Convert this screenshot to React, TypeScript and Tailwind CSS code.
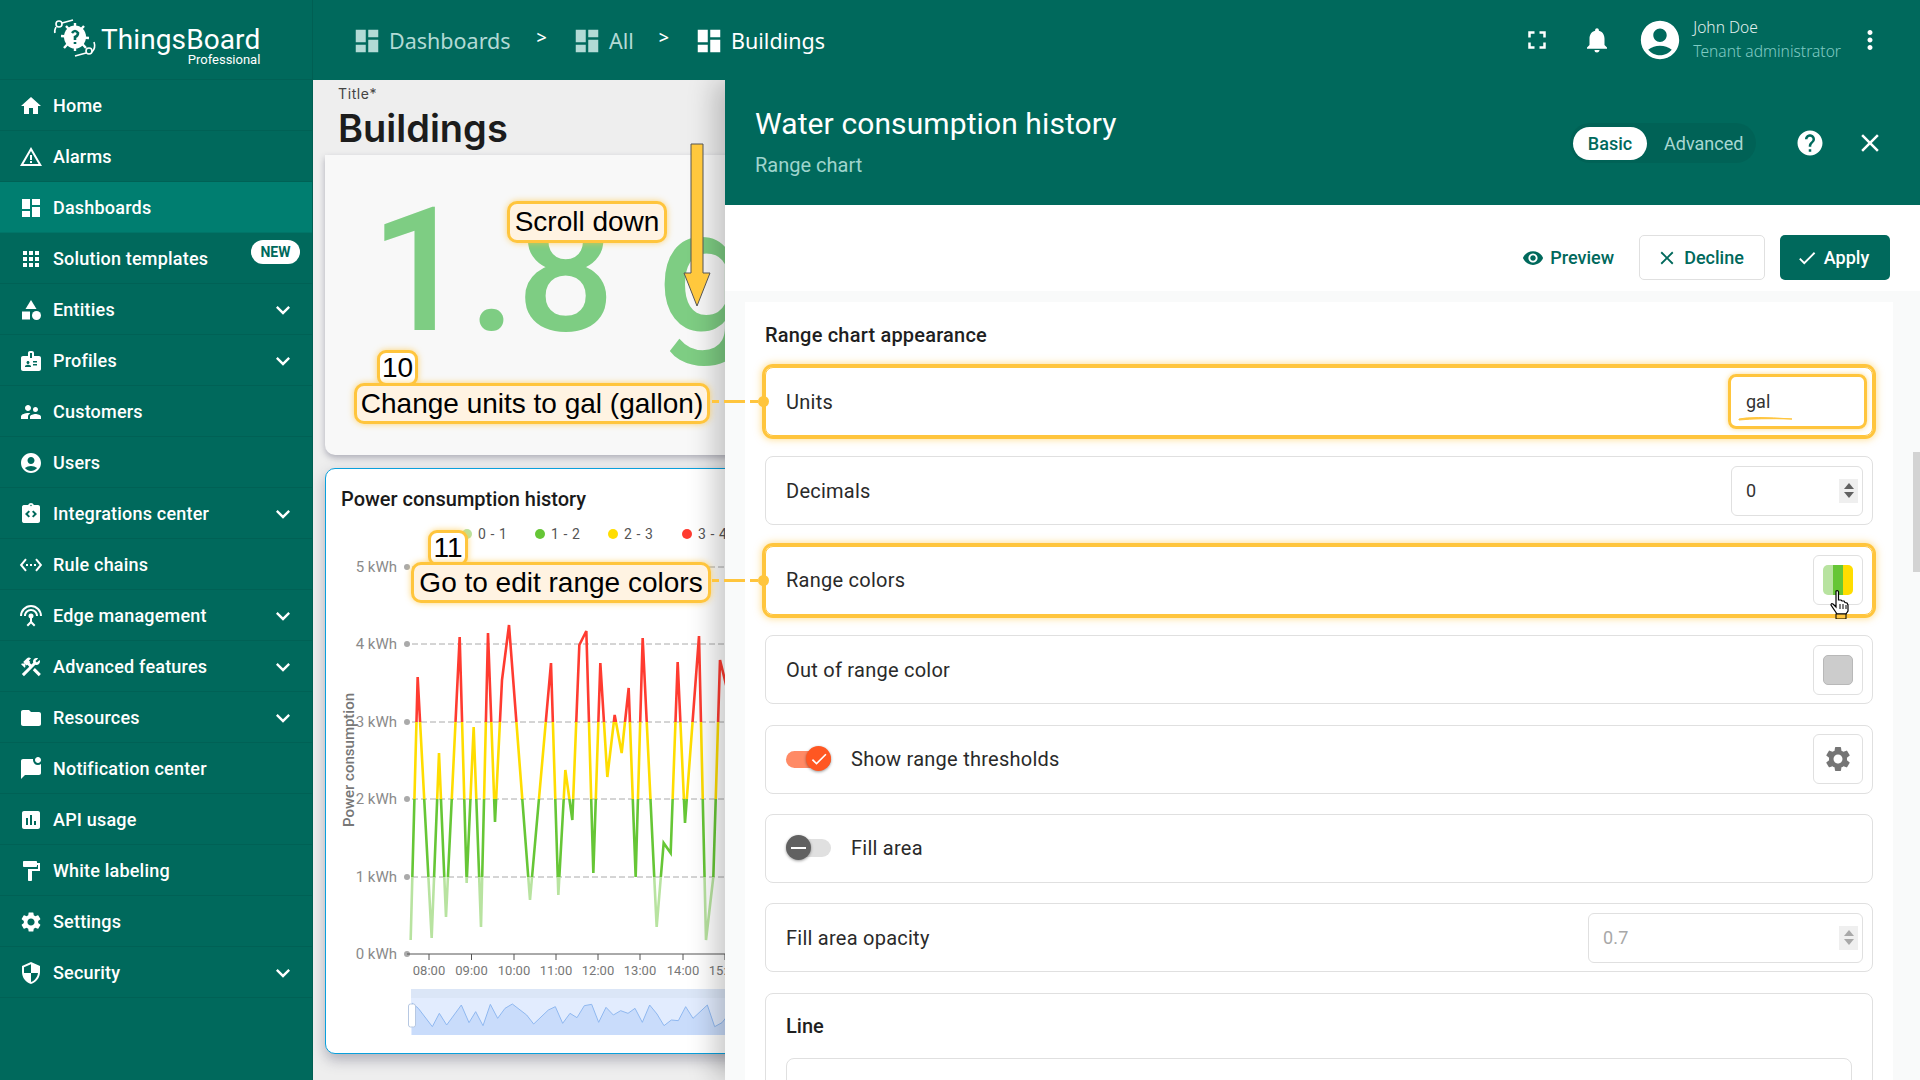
import React from "react";
import {
  MdHome, MdWarningAmber, MdDashboard, MdApps, MdCategory, MdBadge, MdSupervisorAccount, MdAccountCircle,
  MdIntegrationInstructions, MdSettingsEthernet, MdSettingsInputAntenna, MdConstruction, MdFolder,
  MdMarkChatUnread, MdAssessment, MdFormatPaint, MdSettings, MdSecurity, MdExpandMore, MdFullscreen,
  MdNotifications, MdMoreVert, MdHelp, MdClose, MdVisibility, MdCheck,
} from "react-icons/md";

const menu: [string, React.ComponentType<{ size?: number; className?: string }>, boolean][] = [
  ["Home", MdHome, false],
  ["Alarms", MdWarningAmber, false],
  ["Dashboards", MdDashboard, false],
  ["Solution templates", MdApps, false],
  ["Entities", MdCategory, true],
  ["Profiles", MdBadge, true],
  ["Customers", MdSupervisorAccount, false],
  ["Users", MdAccountCircle, false],
  ["Integrations center", MdIntegrationInstructions, true],
  ["Rule chains", MdSettingsEthernet, false],
  ["Edge management", MdSettingsInputAntenna, true],
  ["Advanced features", MdConstruction, true],
  ["Resources", MdFolder, true],
  ["Notification center", MdMarkChatUnread, false],
  ["API usage", MdAssessment, false],
  ["White labeling", MdFormatPaint, false],
  ["Settings", MdSettings, false],
  ["Security", MdSecurity, true],
];

function Logo() {
  return (
    <svg width="46" height="44" viewBox="0 0 46 44" className="shrink-0">
      <g fill="none" stroke="white" strokeWidth="1.6">
        <circle cx="6" cy="6" r="3" />
        <circle cx="36" cy="33" r="3" />
        <path d="M9 5 L20 2 M3 9 Q1 13 2 15 M33 35 L22 38 M41 24 Q43 30 39 34" />
      </g>
      <g stroke="white" strokeWidth="2.4">
        <path d="M13 8 L33 30 M31 8 L11 30 M8 18 L36 20 M22 5 L22 33" />
      </g>
      <ellipse cx="22" cy="19" rx="11" ry="11.5" fill="white" />
      <path d="M19 15 Q22 11 25 15 Q25 18 22 19 L22 22 M22 24 L22 26" fill="none" stroke="#00695c" strokeWidth="2.6" />
    </svg>
  );
}

function Sidebar() {
  return (
    <aside className="w-[313px] h-full bg-[#00695c] flex flex-col shrink-0 border-r border-r-[#005f53] font-['Roboto',sans-serif]">
      <div className="h-[80px] shrink-0 flex items-start pt-[18px] pl-[53px] border-b border-b-[#00000012]">
        <Logo />
        <div className="flex flex-col items-end ml-[2px] text-white mt-[7px]">
          <span className="text-[28px] leading-[30px] font-normal tracking-[0.1px]">ThingsBoard</span>
          <span className="text-[13px] leading-[12px] font-normal -mt-[1px]">Professional</span>
        </div>
      </div>
      {menu.map(([label, Icon, chevron]) => (
        <div
          key={label}
          className={`h-[51px] shrink-0 flex items-center pt-[1px] pl-[19px] pr-[19px] border-b border-b-[#00000012] text-white relative ${label === "Dashboards" ? "bg-[#007e70]" : ""}`}
        >
          <Icon size={24} className="shrink-0" />
          <span className="ml-[10px] text-[18px] font-medium tracking-[0.2px] whitespace-nowrap">{label}</span>
          {chevron && <MdExpandMore size={28} className="ml-auto -mr-[4px]" />}
          {label === "Solution templates" && (
            <span className="absolute right-[12px] top-[7px] h-[24px] w-[49px] rounded-full bg-white text-[#00695c] text-[14px] font-bold flex items-center justify-center">NEW</span>
          )}
        </div>
      ))}
    </aside>
  );
}

function Crumb({ label, active }: { label: string; active?: boolean }) {
  return (
    <div className={`flex items-center gap-[7px] ${active ? "text-white" : "text-[#b2dad5]"}`}>
      <MdDashboard size={30} />
      <span className="text-[21.5px]">{label}</span>
    </div>
  );
}

function TopBar() {
  return (
    <div className="h-[80px] shrink-0 bg-[#00695c] flex items-center pl-[39px] pr-[39px] text-white relative z-20">
      <div className="flex items-center mt-[2px]">
        <Crumb label="Dashboards" />
        <span className="ml-[26px] mr-[25px] text-[18px] font-medium -mt-[7px] text-white">&gt;</span>
        <Crumb label="All" />
        <span className="ml-[25px] mr-[25px] text-[18px] font-medium -mt-[7px] text-white">&gt;</span>
        <Crumb label="Buildings" active />
      </div>
      <div className="ml-auto flex items-center">
        <MdFullscreen size={30} />
        <MdNotifications size={30} className="ml-[30px]" />
        <MdAccountCircle size={46} className="ml-[25px]" />
        <div className="ml-[10px] flex flex-col font-light -mt-[3px]">
          <span className="text-[15.6px] leading-[24px] text-[#e0f0ee]">John Doe</span>
          <span className="text-[15.6px] leading-[24px] text-[#80cbc4]">Tenant administrator</span>
        </div>
        <MdMoreVert size={30} className="ml-[14px] -mr-[4px]" />
      </div>
    </div>
  );
}

const seriesZ: [number, number][] = [
  [272, 940], [293, 677], [335, 938], [357, 753], [378, 917], [419, 637], [440, 883], [461, 727], [483, 927], [504, 633],
  [525, 822], [546, 680], [567, 625], [630, 900], [693, 663], [715, 895], [736, 770], [757, 820], [778, 645], [799, 631],
  [820, 873], [841, 663], [862, 777], [884, 715], [905, 753], [926, 688], [947, 877], [968, 638], [1010, 927], [1031, 843],
  [1052, 853], [1073, 662], [1095, 823], [1137, 636], [1158, 940], [1180, 877], [1200, 660], [1222, 690], [1260, 800],
];
const series = seriesZ.map(([x, y]) => `${320 + x / 3},${y}`).join(" ");

const brushZ: [number, number][] = [
  [295, 745], [337, 800], [358, 760], [380, 795], [424, 735], [447, 788], [467, 755], [489, 797], [511, 733], [533, 775],
  [555, 745], [577, 732], [620, 765], [641, 792], [685, 750], [706, 740], [728, 790], [750, 760], [771, 773], [793, 737],
  [815, 733], [836, 787], [858, 742], [880, 765], [902, 752], [924, 760], [945, 745], [967, 787], [989, 735], [1011, 762],
  [1032, 797], [1054, 780], [1075, 782], [1097, 740], [1119, 775], [1162, 735], [1184, 800], [1206, 788], [1240, 745],
];
const brush = brushZ.map(([x, y]) => `${320 + x / 3},${760 + y / 3}`).join(" ");

const yAxis: [string, number][] = [["5 kWh", 567], ["4 kWh", 644], ["3 kWh", 722], ["2 kWh", 799], ["1 kWh", 877], ["0 kWh", 954]];
const times: [string, number][] = [["08:00", 429], ["09:00", 471.5], ["10:00", 514], ["11:00", 556], ["12:00", 598], ["13:00", 640], ["14:00", 683], ["15:00", 725]];
const legend: [string, string, number][] = [["0 - 1", "#b8e3a0", 467], ["1 - 2", "#66c636", 540], ["2 - 3", "#ffdd00", 613], ["3 - 4", "#ff3b30", 687]];

function Chart() {
  return (
    <svg width="500" height="536" viewBox="325 518 500 536" className="block font-['Roboto',sans-serif]">
      <defs>
        <linearGradient id="bands" gradientUnits="userSpaceOnUse" x1="0" y1="567" x2="0" y2="954">
          <stop offset="0" stopColor="#ff3b30" />
          <stop offset="0.4" stopColor="#ff3b30" />
          <stop offset="0.4" stopColor="#ffdd00" />
          <stop offset="0.6" stopColor="#ffdd00" />
          <stop offset="0.6" stopColor="#66c636" />
          <stop offset="0.8" stopColor="#66c636" />
          <stop offset="0.8" stopColor="#b8e3a0" />
          <stop offset="1" stopColor="#b8e3a0" />
        </linearGradient>
      </defs>
      {legend.map(([t, c, x]) => (
        <g key={t}>
          <circle cx={x} cy={534} r={5} fill={c} />
          <text x={x + 11} y={539} fontSize="14" fill="#555" letterSpacing="0.6">{t}</text>
        </g>
      ))}
      {yAxis.map(([t, y]) => (
        <g key={t}>
          <text x={397} y={y + 5} textAnchor="end" fontSize="15" fill="#8a8a8a">{t}</text>
          <circle cx={407} cy={y} r={3} fill="#aaa" />
          {y !== 954 && <line x1={412} x2={725} y1={y} y2={y} stroke="#aaa" strokeWidth="1" strokeDasharray="6 3" />}
        </g>
      ))}
      <line x1={407} x2={725} y1={954} y2={954} stroke="#555" strokeWidth="1" />
      {times.map(([t, x]) => (
        <g key={t}>
          <line x1={x} x2={x} y1={954} y2={960} stroke="#555" strokeWidth="1" />
          <text x={x} y={975} textAnchor="middle" fontSize="13" fill="#777">{t}</text>
        </g>
      ))}
      <text transform="translate(354 760) rotate(-90)" textAnchor="middle" fontSize="15" fontWeight="500" fill="#777">Power consumption</text>
      <polyline points={series} fill="none" stroke="url(#bands)" strokeWidth="2.6" strokeLinejoin="miter" />
      <rect x={411} y={989} width={320} height={9} fill="#dbe6f7" />
      <rect x={411} y={998} width={320} height={37} fill="#e2ecfe" />
      <polygon points={`412,1035 412,1003 ${brush} 740,1035`} fill="#c9dcfb" />
      <polyline points={`412,1003 ${brush}`} fill="none" stroke="#8fb8f0" strokeWidth="1" />
      <rect x={408.5} y={1004} width={7} height={23} rx={2} fill="#fff" stroke="#b7c8e2" />
    </svg>
  );
}

function Dashboard() {
  return (
    <div className="w-[412px] shrink-0 h-full bg-[#eeeeee] overflow-hidden font-['Inter',sans-serif]">
      <div className="h-[75px] pl-[25px] flex flex-col">
        <span className="text-[14px] leading-[18px] mt-[5px] text-[#444] tracking-[0.6px]">Title*</span>
        <span className="text-[38px] leading-[46px] font-semibold text-[#1c1c1c] mt-[2px]">Buildings</span>
      </div>
      <div className="ml-[12px] w-[520px] h-[300px] bg-[#f8f8f8] rounded-b-[10px] shadow-[0_3px_6px_rgba(60,60,90,.35)] overflow-hidden pl-[45px] pt-[16px] font-['Roboto',sans-serif]">
        <span className="text-[#7ecd83] text-[173px] leading-[200px] font-medium whitespace-nowrap block">1.8 g</span>
      </div>
      <div className="ml-[12px] mt-[13px] w-[520px] h-[586px] bg-white rounded-[10px] border border-[#0aa0dc] shadow-[0_6px_14px_rgba(60,60,90,.35)] overflow-hidden">
        <div className="h-[49px] pl-[15px] pt-[18px] text-[20px] leading-[24px] font-['Roboto',sans-serif] font-medium text-[#1a1a1a]">Power consumption history</div>
        <div className="-ml-[1px]"><Chart /></div>
      </div>
    </div>
  );
}

function Row({ children, hl }: { children: React.ReactNode; hl?: boolean }) {
  return (
    <div className={`h-[69px] shrink-0 rounded-[8px] border flex items-center pl-[20px] pr-[9px] text-[20px] tracking-[0.25px] text-[#2a2a2a] ${hl ? "border-[#ffc53d] shadow-[0_0_0_3px_#ffc53d,0_0_7px_4px_rgba(255,197,61,.5)]" : "border-[#e0e0e0]"}`}>
      {children}
    </div>
  );
}

function Spinner({ dim }: { dim?: boolean }) {
  const c = dim ? "#a8a8a8" : "#616161";
  return (
    <div className="w-[19px] h-[24px] bg-[#efefef] flex flex-col items-center justify-center gap-[3px] ml-auto -mr-[10px]">
      <svg width="10" height="6" viewBox="0 0 10 6"><path d="M5 0 L10 6 L0 6 Z" fill={c} /></svg>
      <svg width="10" height="6" viewBox="0 0 10 6"><path d="M5 6 L10 0 L0 0 Z" fill={c} /></svg>
    </div>
  );
}

function NumberBox({ value, w, dim }: { value: string; w: string; dim?: boolean }) {
  return (
    <div className={`ml-auto ${w} h-[50px] rounded-[6px] border border-[#e0e0e0] flex items-center pl-[14px] pr-[14px] text-[18px] ${dim ? "text-[#a8a8a8]" : "text-[#333]"}`}>
      <span>{value}</span>
      <Spinner dim={dim} />
    </div>
  );
}

function SquareBtn({ children }: { children: React.ReactNode }) {
  return <div className="ml-auto w-[50px] h-[50px] rounded-[6px] border border-[#e0e0e0] flex items-center justify-center relative">{children}</div>;
}

function Toggle({ on }: { on: boolean }) {
  return (
    <div className="relative w-[45px] h-[26px] mr-[20px] shrink-0 flex items-center">
      <div className={`w-[45px] rounded-full ${on ? "h-[17px] bg-[#ff8a65]" : "h-[18px] bg-[#e0e0e0]"}`} />
      <div className={`absolute top-0 w-[25px] h-[25px] rounded-full flex items-center justify-center shadow-[0_1px_3px_rgba(0,0,0,.4)] ${on ? "right-0 bg-[#ff5722]" : "left-0 bg-[#616161]"}`}>
        {on ? <MdCheck size={20} className="text-white" /> : <div className="w-[15px] h-[2px] bg-white" />}
      </div>
    </div>
  );
}

function Hand() {
  return (
    <svg width="20" height="29" viewBox="0 0 20 29" className="absolute left-[16px] top-[34px]">
      <path d="M6 1 Q8 0 8.5 2 L8.5 10 L11 10 L12 11 L14 11 L15 12.5 L17 13 L18 15 L18 21 L16 24 L7 24 L5 21 L1 15 Q1 13 3 14 L6 17 Z" fill="white" stroke="black" strokeWidth="1.2" />
      <path d="M10 14 V19 M13 14 V19 M16 15 V19" stroke="black" strokeWidth="1" />
      <rect x="6" y="24" width="10" height="5" fill="#ffc53d" stroke="black" strokeWidth="1" />
    </svg>
  );
}

function Panel() {
  return (
    <div className="flex-1 h-full bg-white relative z-10 shadow-[-10px_0_26px_rgba(0,0,0,.22)] flex flex-col font-['Roboto',sans-serif] overflow-hidden">
      <div className="h-[125px] shrink-0 bg-[#00695c] flex items-center pl-[30px] pr-[35px] text-white">
        <div className="flex flex-col">
          <span className="text-[30px] leading-[36px] -mt-[1px] tracking-[0.1px]">Water consumption history</span>
          <span className="text-[20px] leading-[28px] mt-[9px] text-[#9fd4cd]">Range chart</span>
        </div>
        <div className="ml-auto h-[40px] w-[186px] rounded-full bg-[#00000010] flex items-center mt-[1px] pl-[3px] text-[18px]">
          <span className="h-[33px] w-[74px] rounded-full bg-white text-[#00695c] font-medium flex items-center justify-center">Basic</span>
          <span className="ml-[17px] text-[#a8d8d2]">Advanced</span>
        </div>
        <MdHelp size={30} className="ml-[39px]" />
        <MdClose size={30} className="ml-[30px]" />
      </div>
      <div className="h-[86px] shrink-0 flex items-start justify-end pt-[30px] pr-[30px] text-[18px] font-medium text-[#00695c]">
        <div className="h-[45px] flex items-center gap-[6px] mr-[25px]"><MdVisibility size={22} />Preview</div>
        <div className="h-[45px] w-[126px] rounded-[5px] border border-[#e0e0e0] flex items-center justify-center gap-[6px] pr-[4px] mr-[15px]"><MdClose size={22} />Decline</div>
        <div className="h-[45px] w-[110px] rounded-[5px] bg-[#00695c] text-white flex items-center justify-center gap-[6px] pr-[5px]"><MdCheck size={22} />Apply</div>
      </div>
      <div className="flex-1 bg-[#f9fafa] pl-[20px] pr-[27px] pt-[11px] overflow-hidden">
        <div className="bg-white h-[900px] px-[20px] pt-[20px]">
          <div className="text-[20px] leading-[24px] mt-[1px] font-medium tracking-[0.2px] text-[#1f1f1f] mb-[20px]">Range chart appearance</div>
          <div className="flex flex-col gap-[20.4px]">
            <Row hl>
              <span>Units</span>
              <div className="ml-auto w-[139px] h-[55px] -mr-[4px] rounded-[8px] border-[3px] border-[#ffc53d] shadow-[0_0_5px_rgba(255,197,61,.6)] flex items-center pl-[15px] text-[18px] text-[#333] relative tracking-normal">
                gal
                <svg width="56" height="6" viewBox="0 0 56 6" className="absolute left-[7px] top-[38px]"><path d="M1 4 Q 14 1 54 4 Q 20 3 1 5 Z" fill="#ffc53d" stroke="#ffc53d" strokeWidth="1" /></svg>
              </div>
            </Row>
            <Row>
              <span>Decimals</span>
              <NumberBox value="0" w="w-[132px]" />
            </Row>
            <Row hl>
              <span>Range colors</span>
              <SquareBtn>
                <div className="w-[30px] h-[30px] rounded-[5px] overflow-hidden flex">
                  <div className="flex-1 bg-[#b8e3a0]" />
                  <div className="flex-1 bg-[#66c636]" />
                  <div className="flex-1 bg-[#ffdd00]" />
                </div>
                <Hand />
              </SquareBtn>
            </Row>
            <Row>
              <span>Out of range color</span>
              <SquareBtn><div className="w-[30px] h-[30px] rounded-[5px] bg-[#cccccc] border border-[#b8b8b8]" /></SquareBtn>
            </Row>
            <Row>
              <Toggle on />
              <span>Show range thresholds</span>
              <SquareBtn><MdSettings size={30} className="text-[#757575]" /></SquareBtn>
            </Row>
            <Row>
              <Toggle on={false} />
              <span>Fill area</span>
            </Row>
            <Row>
              <span>Fill area opacity</span>
              <NumberBox value="0.7" w="w-[275px]" dim />
            </Row>
            <div className="h-[200px] shrink-0 rounded-[8px] border border-[#e0e0e0] px-[20px] pt-[20px]">
              <div className="text-[20px] leading-[24px] font-medium text-[#1f1f1f]">Line</div>
              <div className="mt-[20px] h-[100px] rounded-[8px] border border-[#e0e0e0]" />
            </div>
          </div>
        </div>
      </div>
      <div className="absolute right-0 top-[372px] w-[7px] h-[120px] bg-[#d3d3d3]" />
    </div>
  );
}

const note = "absolute bg-[#fff3e2] border-[3px] border-[#ffc53d] rounded-[10px] shadow-[0_0_6px_rgba(255,197,61,.7)] flex items-center justify-center text-black font-['Liberation_Sans',sans-serif] whitespace-nowrap z-30";
const badge = "absolute bg-white border-[3px] border-[#ffc53d] rounded-[9px] shadow-[0_0_6px_rgba(255,197,61,.7)] flex items-center justify-center text-black font-['Liberation_Sans',sans-serif] z-30";
const dash = "absolute h-[3px] w-[46px] left-[712px] z-30 bg-[linear-gradient(90deg,#ffc53d_0_7px,transparent_7px_12px,#ffc53d_12px_33px,transparent_33px_38px,#ffc53d_38px)]";

export default function App() {
  return (
    <div className="relative w-[1920px] h-[1080px] overflow-hidden flex bg-white">
      <Sidebar />
      <div className="flex-1 flex flex-col min-w-0">
        <TopBar />
        <div className="flex-1 flex min-h-0">
          <Dashboard />
          <Panel />
        </div>
      </div>

      <div className={`${note} left-[507px] top-[201px] w-[160px] h-[42px] text-[28px]`}>Scroll down</div>
      <svg width="30" height="166" viewBox="0 0 30 166" className="absolute left-[682px] top-[143px] z-30">
        <path d="M9 1 H21 V130 H28 L15 163 L2 130 H9 Z" fill="#ffc83d" stroke="#555" strokeWidth="1" />
      </svg>
      <div className={`${badge} left-[377px] top-[350px] w-[41px] h-[36px] text-[28px]`}>10</div>
      <div className={`${note} left-[354px] top-[383px] w-[356px] h-[41px] text-[28px]`}>Change units to gal (gallon)</div>
      <div className={`${dash} top-[400px]`} />
      <div className="absolute left-[758px] top-[396px] w-[11px] h-[11px] rounded-full bg-[#ffc53d] z-30" />

      <div className={`${badge} left-[428px] top-[530px] w-[40px] h-[36px] text-[28px]`}>11</div>
      <div className={`${note} left-[411px] top-[562px] w-[300px] h-[41px] text-[28px]`}>Go to edit range colors</div>
      <div className={`${dash} top-[579px]`} />
      <div className="absolute left-[758px] top-[575px] w-[11px] h-[11px] rounded-full bg-[#ffc53d] z-30" />
    </div>
  );
}
